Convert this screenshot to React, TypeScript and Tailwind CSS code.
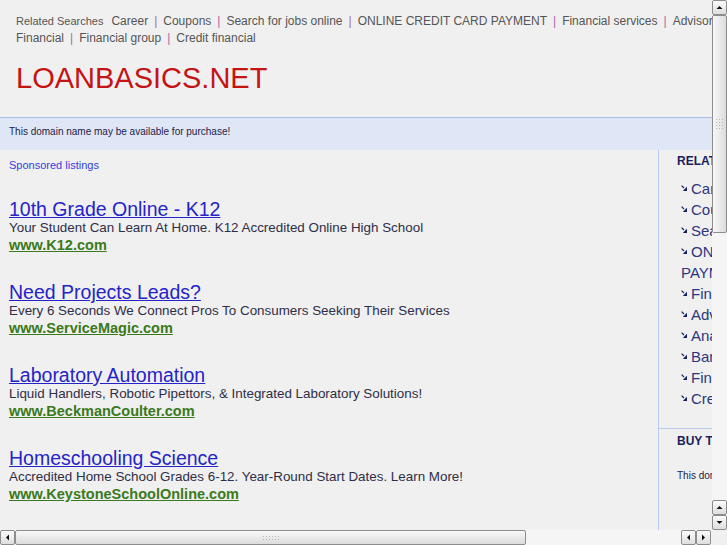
import React from 'react'

// Parked-domain landing page, shown inside a browser viewport with old-style scrollbars.

const topLinks1 = ['Career', 'Coupons', 'Search for jobs online', 'ONLINE CREDIT CARD PAYMENT', 'Financial services', 'Advisor financial', 'Analyst']
const topLinks2 = ['Financial', 'Financial group', 'Credit financial']

const ads = [
  { title: '10th Grade Online - K12', desc: 'Your Student Can Learn At Home. K12 Accredited Online High School', url: 'www.K12.com' },
  { title: 'Need Projects Leads?', desc: 'Every 6 Seconds We Connect Pros To Consumers Seeking Their Services', url: 'www.ServiceMagic.com' },
  { title: 'Laboratory Automation', desc: 'Liquid Handlers, Robotic Pipettors, & Integrated Laboratory Solutions!', url: 'www.BeckmanCoulter.com' },
  { title: 'Homeschooling Science', desc: 'Accredited Home School Grades 6-12. Year-Round Start Dates. Learn More!', url: 'www.KeystoneSchoolOnline.com' },
]

const related = ['Career', 'Coupons', 'Search for jobs online', 'ONLINE CREDIT CARD PAYMENT', 'Financial services', 'Advisor financial', 'Analyst financial', 'Banking financial', 'Financial group', 'Credit financial']

function Arrow() {
  return (
    <svg width="6" height="6" viewBox="0 0 6 6" className="inline-block mr-[4px] align-[3px]">
      <path d="M0.6 0.6 L3 3" stroke="#13205e" strokeWidth="1.1" />
      <path d="M6 1.8 L6 6 L1.8 6 Z" fill="#13205e" />
    </svg>
  )
}

function Tri({ dir }: { dir: 'up' | 'down' | 'left' | 'right' }) {
  const d = {
    up: 'M0.5 4 L3.5 1 L6.5 4 Z',
    down: 'M0.5 1 L3.5 4 L6.5 1 Z',
    left: 'M4 0.5 L1 3.5 L4 6.5 Z',
    right: 'M1 0.5 L4 3.5 L1 6.5 Z',
  }[dir]
  const vert = dir === 'up' || dir === 'down'
  return (
    <svg width={vert ? 7 : 5} height={vert ? 5 : 7} viewBox={vert ? '0 0 7 5' : '0 0 5 7'}>
      <path d={d} fill="#111" />
    </svg>
  )
}

function Btn({ dir }: { dir: 'up' | 'down' | 'left' | 'right' }) {
  return (
    <div className="w-[15px] h-[15px] shrink-0 flex items-center justify-center border border-[#8c8c8c] rounded-[2px] bg-gradient-to-b from-[#fbfbfb] to-[#dedede]">
      <Tri dir={dir} />
    </div>
  )
}

function Grip({ vertical }: { vertical: boolean }) {
  const dots = Array.from({ length: 12 })
  return (
    <div className={vertical ? 'grid grid-cols-3 gap-[2px]' : 'grid grid-cols-6 gap-[2px]'}>
      {dots.map((_, i) => (
        <div key={i} className="w-[1px] h-[1px] bg-[#b4b4b4]" />
      ))}
    </div>
  )
}

export default function App() {
  return (
    <div
      className="w-[727px] h-[545px] flex flex-col overflow-hidden bg-[#f0f0f0]"
      style={{ fontFamily: '"Liberation Sans", Arial, sans-serif' }}
    >
      <div className="flex flex-1 min-h-0">
        {/* Viewport */}
        <div className="flex-1 overflow-hidden">
          <div className="w-[930px]">
            {/* Related searches */}
            <div className="pl-4 pt-[13px] text-[12px] leading-[17px] text-[#555]">
              <div className="whitespace-nowrap">
                <span className="text-[11px] mr-[8px]">Related Searches</span>
                {topLinks1.map((l, i) => (
                  <span key={l}>
                    {i > 0 && <span className="text-[#a46aa8] mx-[6px]">|</span>}
                    {l}
                  </span>
                ))}
              </div>
              <div className="whitespace-nowrap">
                {topLinks2.map((l, i) => (
                  <span key={l}>
                    {i > 0 && <span className="text-[#a46aa8] mx-[6px]">|</span>}
                    {l}
                  </span>
                ))}
              </div>
            </div>

            <h1 className="pl-4 mt-[14px] text-[29px] leading-[34px] text-[#c41414]">LOANBASICS.NET</h1>

            {/* Banner */}
            <div className="mt-[22px] h-[33px] border-t border-[#a9c0e8] bg-[#dfe6f5] pl-[9px] pt-[8px] text-[10px] leading-[12px] text-[#22224a]">
              This domain name may be available for purchase!
            </div>

            <div className="flex">
              {/* Sponsored listings */}
              <div className="w-[659px] shrink-0 border-r border-[#b9cbec] pl-[9px] pt-[8px] pb-[40px]">
                <div className="text-[11px] leading-[14px] text-[#3340e0]">Sponsored listings</div>
                <div className="mt-[26px]">
                  {ads.map(ad => (
                    <div key={ad.title} className="mb-[27px]">
                      <div className="text-[19.5px] leading-[22px] text-[#2424c8] underline">{ad.title}</div>
                      <div className="text-[13.4px] leading-[16px] text-[#2e2e48]">{ad.desc}</div>
                      <div className="text-[14.5px] leading-[18px] font-bold text-[#3a7a1c] underline">{ad.url}</div>
                    </div>
                  ))}
                </div>
              </div>

              {/* Related column */}
              <div className="flex-1">
                <div className="pl-[18px] pt-[4px] pb-[19px]">
                  <div className="text-[12px] leading-[14px] font-bold text-[#1a1f5c]">RELATED SEARCHES</div>
                  <ul className="mt-[10px] w-[200px] text-[15px] leading-[21px] text-[#2b3680]">
                    {related.map(r => (
                      <li key={r} className="pl-[4px]">
                        <Arrow />
                        {r}
                      </li>
                    ))}
                  </ul>
                </div>
                <div className="border-t border-[#b9cbec] pl-[18px] pt-[5px] pb-[60px]">
                  <div className="text-[12px] leading-[14px] font-bold text-[#1a1f5c]">BUY THIS DOMAIN</div>
                  <div className="mt-[22px] text-[10px] leading-[12px] text-[#22224a]">This domain name may be for sale.</div>
                </div>
              </div>
            </div>
          </div>
        </div>

        {/* Vertical scrollbar */}
        <div className="w-[15px] shrink-0 flex flex-col bg-[#f5f5f5]">
          <Btn dir="up" />
          <div className="h-[218px] shrink-0 border border-[#8c8c8c] rounded-[2px] bg-gradient-to-r from-[#f8f8f8] to-[#dcdcdc] flex items-center justify-center">
            <Grip vertical />
          </div>
          <div className="flex-1" />
          <Btn dir="up" />
          <Btn dir="down" />
        </div>
      </div>

      {/* Horizontal scrollbar */}
      <div className="h-[15px] shrink-0 flex bg-[#f5f5f5]">
        <Btn dir="left" />
        <div className="w-[511px] shrink-0 border border-[#8c8c8c] rounded-[2px] bg-gradient-to-b from-[#f8f8f8] to-[#dcdcdc] flex items-center justify-center">
          <Grip vertical={false} />
        </div>
        <div className="flex-1" />
        <Btn dir="left" />
        <Btn dir="right" />
        <div className="w-[16px] shrink-0 bg-[#f0f0f0]" />
      </div>
    </div>
  )
}
